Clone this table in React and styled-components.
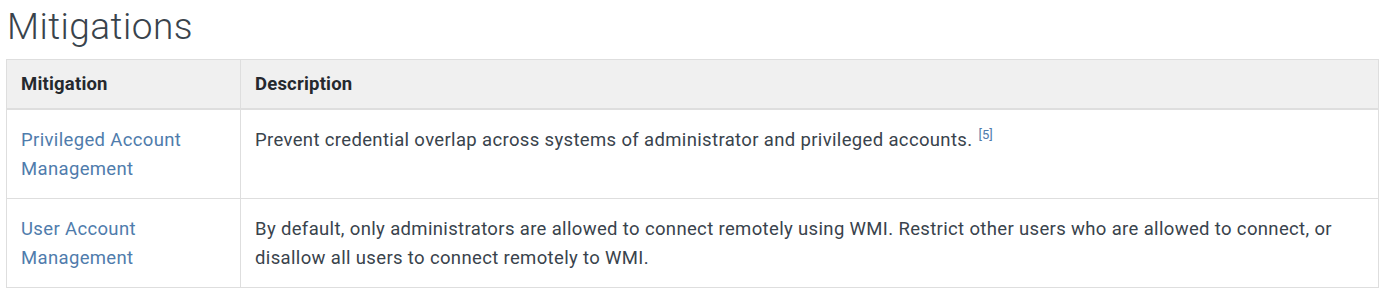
import React from "react";
import styled, { createGlobalStyle } from "styled-components";

const Global = createGlobalStyle`
  html, body { margin: 0; padding: 0; background: #fff; }
  body { font-family: Roboto, "Liberation Sans", sans-serif; color: #39434c; }
`;

const Page = styled.div`
  padding: 4px 7px 0 6px;
`;

const Title = styled.h2`
  margin: 0 0 9px 1px;
  font-size: 37px;
  font-weight: 300;
  line-height: 46px;
  letter-spacing: 0.45px;
  color: #39434c;
`;

const Table = styled.table`
  width: 1373px;
  border-collapse: collapse;
  border: 1px solid #dedede;
`;

const Th = styled.th`
  text-align: left;
  background: #f0f0f0;
  font-size: 18.5px;
  font-weight: 700;
  line-height: 22px;
  padding: 13px 14px;
  border: 1px solid #dedede;
  border-bottom: 2px solid #dedede;
  color: #25292e;
  letter-spacing: 0.2px;
  width: ${(p) => p.$w || "auto"};
`;

const Td = styled.td`
  font-size: 18.5px;
  line-height: 29px;
  letter-spacing: 0.35px;
  padding: 16px 14px 14px;
  border: 1px solid #dedede;
  vertical-align: top;
  color: #39434c;
`;

const Link = styled.a`
  color: #4f7cac;
  text-decoration: none;
`;

const Ref = styled.sup`
  font-size: 13px;
  line-height: 0;
  vertical-align: super;
  margin-left: 6px;
  letter-spacing: 0;
  a { color: #4f7cac; text-decoration: none; }
`;

const rows = [
  {
    name: "Privileged Account Management",
    desc: "Prevent credential overlap across systems of administrator and privileged accounts.",
    ref: "[5]",
  },
  {
    name: "User Account Management",
    desc:
      "By default, only administrators are allowed to connect remotely using WMI. Restrict other users who are allowed to connect, or disallow all users to connect remotely to WMI.",
  },
];

export default function App() {
  return (
    <Page>
      <Global />
      <Title>Mitigations</Title>
      <Table>
        <thead>
          <tr>
            <Th $w="205px">Mitigation</Th>
            <Th>Description</Th>
          </tr>
        </thead>
        <tbody>
          {rows.map((r) => (
            <tr key={r.name}>
              <Td>
                <Link href="#">{r.name}</Link>
              </Td>
              <Td>
                {r.desc}
                {r.ref && (
                  <Ref>
                    <a href="#">{r.ref}</a>
                  </Ref>
                )}
              </Td>
            </tr>
          ))}
        </tbody>
      </Table>
    </Page>
  );
}
